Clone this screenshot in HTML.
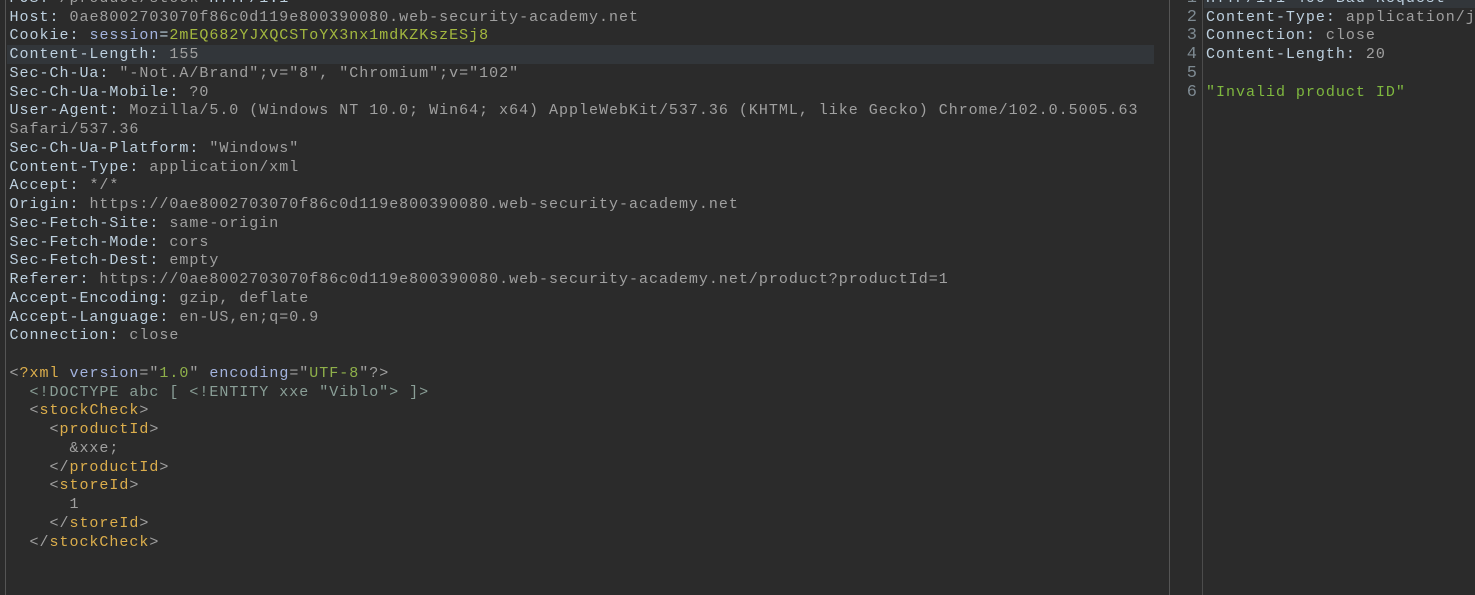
<!DOCTYPE html>
<html><head><meta charset="utf-8"><style>
html,body{margin:0;padding:0;background:#2b2b2b;width:1475px;height:595px;overflow:hidden}
#r{position:relative;width:1475px;height:595px;overflow:hidden;font-family:"Liberation Mono",monospace;font-size:15px;line-height:18.75px;color:#a0a0a0;letter-spacing:0.99px}
.l{position:absolute;white-space:pre;height:18.75px}
.bar{position:absolute;background:#555}
.k{color:#bdd0df}.s{color:#a3b3de}.g{color:#a3b83f}.gr{color:#8fb04a}.t{color:#dcae4c}.d{color:#8a9f97}.q{color:#7fb83f}
.a{color:#a3b3de}.n{color:#7e8a92;position:absolute;white-space:pre;width:17px;text-align:right;font-size:17px;letter-spacing:0}
</style></head><body><div id="r">
<div class="bar" style="left:5px;top:0;width:1px;height:595px"></div>
<div class="bar" style="left:1169px;top:0;width:1px;height:595px"></div>
<div class="bar" style="left:1202px;top:0;width:1px;height:595px;background:#4c4c4c"></div>
<div style="position:absolute;left:7px;top:45px;width:1147px;height:19px;background:#32363a"></div>
<div style="position:absolute;left:1204px;top:0;width:271px;height:8px;background:#32363a"></div>

<div class="l" style="left:9.5px;top:-10px"><span class="k">POST</span> /product/stock <span class="k">HTTP/1.1</span></div>
<div class="l" style="left:9.5px;top:8.6px"><span class="k">Host:</span> 0ae8002703070f86c0d119e800390080.web-security-academy.net</div>
<div class="l" style="left:9.5px;top:27.3px"><span class="k">Cookie:</span> <span class="s">session</span><span class="k">=</span><span class="g">2mEQ682YJXQCSToYX3nx1mdKZKszESj8</span></div>
<div class="l" style="left:9.5px;top:46px"><span class="k">Content-Length:</span> 155</div>
<div class="l" style="left:9.5px;top:64.8px"><span class="k">Sec-Ch-Ua:</span> "-Not.A/Brand";v="8", "Chromium";v="102"</div>
<div class="l" style="left:9.5px;top:83.5px"><span class="k">Sec-Ch-Ua-Mobile:</span> ?0</div>
<div class="l" style="left:9.5px;top:102.3px"><span class="k">User-Agent:</span> Mozilla/5.0 (Windows NT 10.0; Win64; x64) AppleWebKit/537.36 (KHTML, like Gecko) Chrome/102.0.5005.63</div>
<div class="l" style="left:9.5px;top:121px">Safari/537.36</div>
<div class="l" style="left:9.5px;top:139.8px"><span class="k">Sec-Ch-Ua-Platform:</span> "Windows"</div>
<div class="l" style="left:9.5px;top:158.5px"><span class="k">Content-Type:</span> application/xml</div>
<div class="l" style="left:9.5px;top:177.3px"><span class="k">Accept:</span> */*</div>
<div class="l" style="left:9.5px;top:196px"><span class="k">Origin:</span> https://0ae8002703070f86c0d119e800390080.web-security-academy.net</div>
<div class="l" style="left:9.5px;top:214.8px"><span class="k">Sec-Fetch-Site:</span> same-origin</div>
<div class="l" style="left:9.5px;top:233.5px"><span class="k">Sec-Fetch-Mode:</span> cors</div>
<div class="l" style="left:9.5px;top:252.3px"><span class="k">Sec-Fetch-Dest:</span> empty</div>
<div class="l" style="left:9.5px;top:271px"><span class="k">Referer:</span> https://0ae8002703070f86c0d119e800390080.web-security-academy.net/product?productId=1</div>
<div class="l" style="left:9.5px;top:289.8px"><span class="k">Accept-Encoding:</span> gzip, deflate</div>
<div class="l" style="left:9.5px;top:308.5px"><span class="k">Accept-Language:</span> en-US,en;q=0.9</div>
<div class="l" style="left:9.5px;top:327.3px"><span class="k">Connection:</span> close</div>

<div class="l" style="left:9.5px;top:364.8px">&lt;<span class="t">?xml</span> <span class="a">version</span>="<span class="gr">1.0</span>" <span class="a">encoding</span>="<span class="gr">UTF-8</span>"?&gt;</div>
<div class="l" style="left:9.5px;top:383.5px">  <span class="d">&lt;!DOCTYPE abc [ &lt;!ENTITY xxe "Viblo"&gt; ]&gt;</span></div>
<div class="l" style="left:9.5px;top:402.3px">  &lt;<span class="t">stockCheck</span>&gt;</div>
<div class="l" style="left:9.5px;top:421px">    &lt;<span class="t">productId</span>&gt;</div>
<div class="l" style="left:9.5px;top:439.8px">      &amp;xxe;</div>
<div class="l" style="left:9.5px;top:458.5px">    &lt;/<span class="t">productId</span>&gt;</div>
<div class="l" style="left:9.5px;top:477.3px">    &lt;<span class="t">storeId</span>&gt;</div>
<div class="l" style="left:9.5px;top:496px">      1</div>
<div class="l" style="left:9.5px;top:514.8px">    &lt;/<span class="t">storeId</span>&gt;</div>
<div class="l" style="left:9.5px;top:533.5px">  &lt;/<span class="t">stockCheck</span>&gt;</div>

<div class="n" style="left:1180px;top:-10px">1</div>
<div class="n" style="left:1180px;top:8.6px">2</div>
<div class="n" style="left:1180px;top:27.3px">3</div>
<div class="n" style="left:1180px;top:46px">4</div>
<div class="n" style="left:1180px;top:64.8px">5</div>
<div class="n" style="left:1180px;top:83.5px">6</div>

<div class="l" style="left:1206px;top:-10px"><span class="k">HTTP/1.1 400 Bad Request</span></div>
<div class="l" style="left:1206px;top:8.6px"><span class="k">Content-Type:</span> application/j</div>
<div class="l" style="left:1206px;top:27.3px"><span class="k">Connection:</span> close</div>
<div class="l" style="left:1206px;top:46px"><span class="k">Content-Length:</span> 20</div>
<div class="l q" style="left:1206px;top:83.5px">"Invalid product ID"</div>
</div></body></html>
